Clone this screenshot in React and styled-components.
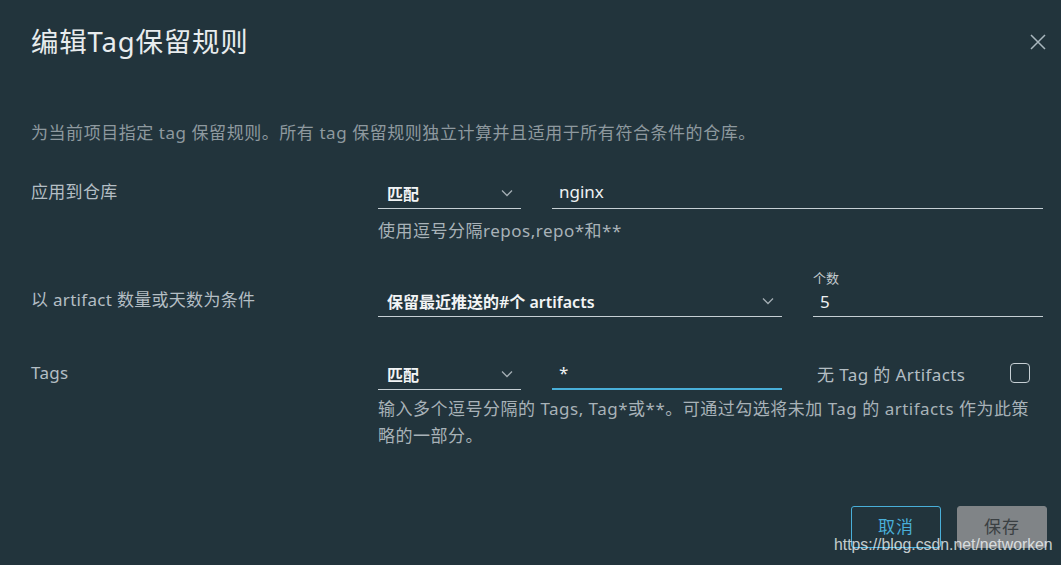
import React from 'react';
import styled, { createGlobalStyle } from 'styled-components';

const GlobalStyle = createGlobalStyle`
  html, body {
    margin: 0;
    padding: 0;
    background: #22343c;
  }
  body {
    font-family: "Noto Sans", "Noto Sans CJK SC", sans-serif;
  }
`;

const Modal = styled.div`
  position: relative;
  width: 1061px;
  height: 565px;
  box-sizing: border-box;
  padding: 26px 18px 0 31px;
  background: #22343c;
  overflow: hidden;
`;

const Header = styled.div`
  display: flex;
  justify-content: space-between;
  align-items: flex-start;
`;

const Title = styled.h1`
  margin: 0;
  font-size: 27.5px;
  line-height: 32px;
  font-weight: 400;
  letter-spacing: 0.8px;
  color: #e8ecee;
`;

const CloseButton = styled.button`
  margin: 8px -3px 0 0;
  padding: 0;
  width: 16px;
  height: 16px;
  border: 0;
  background: none;
  display: flex;
`;

const Description = styled.p`
  margin: 62px 0 0;
  font-size: 17px;
  line-height: 26px;
  letter-spacing: 0.55px;
  color: #8e999f;
`;

const Form = styled.div`
  display: grid;
  grid-template-columns: 347px 1fr;
  margin-top: 32px;
`;

const Label = styled.div`
  align-self: end;
  margin-top: ${p => p.$gap || 0}px;
  padding-bottom: 3px;
  font-size: 17px;
  line-height: 28px;
  letter-spacing: 0.3px;
  color: #b4bec4;
`;

const FieldLine = styled.div`
  display: flex;
  align-items: flex-end;
  gap: 31px;
  margin-top: ${p => p.$gap || 0}px;
`;

const SelectBox = styled.div`
  display: flex;
  align-items: center;
  justify-content: space-between;
  box-sizing: border-box;
  width: ${p => p.$width}px;
  height: 31px;
  padding: 0 8px 0 9px;
  border-bottom: 1px solid #c6cfd4;
  font-size: 16px;
  font-weight: 600;
  color: #f2f4f5;
`;

const TextInput = styled.div`
  box-sizing: border-box;
  ${p => (p.$width ? `width: ${p.$width}px;` : 'flex: 1;')}
  height: 31px;
  padding: 0 7px;
  line-height: 28px;
  font-size: 17px;
  color: #eef1f2;
  border-bottom: ${p => (p.$focused ? '2px solid #49afd9' : '1px solid #c6cfd4')};
`;

const FieldGroup = styled.div`
  display: flex;
  flex-direction: column;
  flex: 1;
`;

const Caption = styled.span`
  font-size: 13px;
  line-height: 16px;
  margin-bottom: 2px;
  color: #c3cace;
`;

const Helper = styled.div`
  grid-column: 2;
  margin-top: ${p => p.$gap}px;
  font-size: 17px;
  line-height: 27px;
  letter-spacing: 0.5px;
  color: #a8b2b8;
`;

const CheckLabel = styled.label`
  display: flex;
  align-items: center;
  justify-content: space-between;
  flex: 1;
  height: 31px;
  padding: 0 13px 3px 4px;
  box-sizing: border-box;
  font-size: 17px;
  letter-spacing: 0.4px;
  color: #b4bec4;
`;

const CheckBox = styled.span`
  box-sizing: border-box;
  width: 20px;
  height: 20px;
  border: 1.5px solid #c6cfd4;
  border-radius: 4px;
`;

const Footer = styled.div`
  display: flex;
  justify-content: flex-end;
  gap: 16px;
  margin: 57px -4px 0 0;
`;

const Button = styled.button`
  box-sizing: border-box;
  width: 90px;
  height: 42px;
  padding: 0 0 4px;
  border-radius: 3px;
  font-family: "Noto Sans CJK SC", sans-serif;
  font-size: 17px;
  letter-spacing: 1px;
  border: 1px solid ${p => (p.$primary ? '#808487' : '#49afd9')};
  background: ${p => (p.$primary ? '#808487' : 'transparent')};
  color: ${p => (p.$primary ? '#3a3f42' : '#49afd9')};
`;

const Watermark = styled.span`
  position: absolute;
  left: 834px;
  top: 535px;
  font-family: "Liberation Sans", Arial, sans-serif;
  font-size: 15.8px;
  line-height: 20px;
  color: rgba(240, 244, 246, 0.8);
  white-space: nowrap;
`;

const Chevron = () => (
  <svg width="12" height="8" viewBox="0 0 12 8" fill="none">
    <path d="M1 1.5 L6 6.5 L11 1.5" stroke="#a3adb3" strokeWidth="1.3" />
  </svg>
);

const CloseIcon = () => (
  <svg width="16" height="16" viewBox="0 0 16 16">
    <path d="M1 1 L15 15 M15 1 L1 15" stroke="#a9b7be" strokeWidth="1.5" />
  </svg>
);

const App = () => (
  <>
    <GlobalStyle />
    <Modal>
      <Header>
        <Title>编辑Tag保留规则</Title>
        <CloseButton aria-label="关闭">
          <CloseIcon />
        </CloseButton>
      </Header>
      <Description>
        为当前项目指定 tag 保留规则。所有 tag 保留规则独立计算并且适用于所有符合条件的仓库。
      </Description>

      <Form>
        <Label>应用到仓库</Label>
        <FieldLine>
          <SelectBox $width={143}>
            <span>匹配</span>
            <Chevron />
          </SelectBox>
          <TextInput>nginx</TextInput>
        </FieldLine>
        <Helper $gap={8}>使用逗号分隔repos,repo*和**</Helper>

        <Label $gap={26}>以 artifact 数量或天数为条件</Label>
        <FieldLine $gap={26}>
          <SelectBox $width={404}>
            <span>保留最近推送的#个 artifacts</span>
            <Chevron />
          </SelectBox>
          <FieldGroup>
            <Caption>个数</Caption>
            <TextInput>5</TextInput>
          </FieldGroup>
        </FieldLine>

        <Label $gap={42}>Tags</Label>
        <FieldLine $gap={42}>
          <SelectBox $width={143}>
            <span>匹配</span>
            <Chevron />
          </SelectBox>
          <TextInput $width={230} $focused>*</TextInput>
          <CheckLabel>
            无 Tag 的 Artifacts
            <CheckBox />
          </CheckLabel>
        </FieldLine>
        <Helper $gap={5}>
          输入多个逗号分隔的 Tags, Tag*或**。可通过勾选将未加 Tag 的 artifacts 作为此策略的一部分。
        </Helper>
      </Form>

      <Footer>
        <Button>取消</Button>
        <Button $primary>保存</Button>
      </Footer>
      <Watermark>https://blog.csdn.net/networken</Watermark>
    </Modal>
  </>
);

export default App;
